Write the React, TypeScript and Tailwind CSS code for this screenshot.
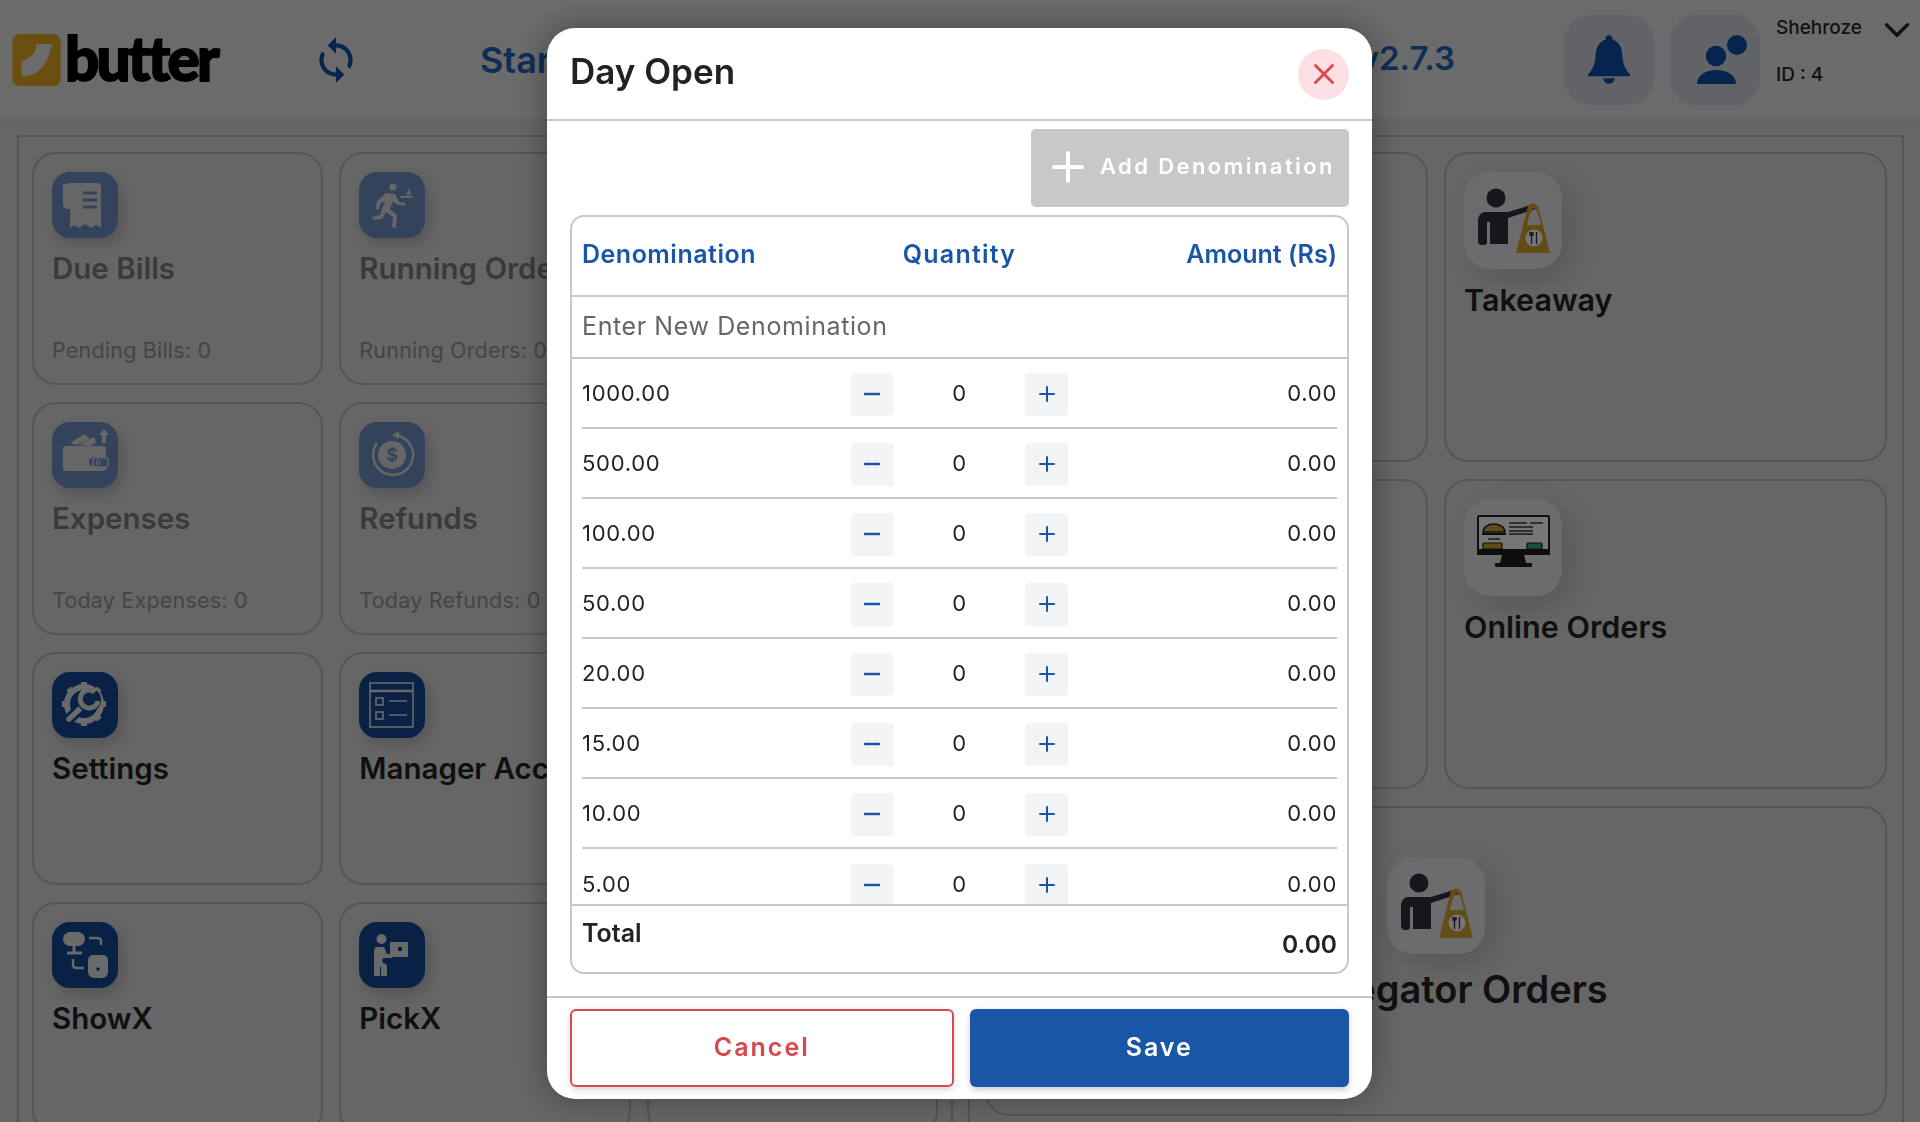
import type { ReactNode } from 'react';
import { ChevronDown, Minus, Plus, X } from 'lucide-react';
import { MdSync } from 'react-icons/md';

const denominations = ['1000.00', '500.00', '100.00', '50.00', '20.00', '15.00', '10.00', '5.00'];

function ReceiptIcon() {
  return (
    <svg viewBox="0 0 66 66" className="h-full w-full">
      <path d="M11 12h8a4 4 0 0 1 4 4v17a5 5 0 0 1-5 4h-3a5 5 0 0 1-4-4z" fill="#cccccc" />
      <path d="M15 11h30a4 4 0 0 1 4 4v41l-5-3-5 3-6-4-6 4-5-3-4 3V17a6 6 0 0 0-3-6z" fill="#cccccc" />
      <path d="M31 21h14M31 28h14M31 35h14" stroke="#6886b8" strokeWidth="3" />
    </svg>
  );
}

function RunnerIcon() {
  return (
    <svg viewBox="0 0 66 66" className="h-full w-full">
      <circle cx="34" cy="15" r="3.600" fill="#cccccc" />
      <path
        d="M27 21l9 1 4 8 7 1-1 3-9-2-3-3-3 8 7 6-1 13-4-1 1-10-7-5-4 7-9 1-1-3 8-2 5-14-5 3-1 6-3-1 1-8z"
        fill="#cccccc"
      />
      <path d="M41 26h12l1-2H41zM47 23h5l-2-7z" fill="#cccccc" />
    </svg>
  );
}

function WalletIcon() {
  return (
    <svg viewBox="0 0 66 66" className="h-full w-full">
      <path d="M18 21l15-9 5 5-14 6zM27 23l15-8 2 6-6 3z" fill="#cccccc" />
      <path d="M52 7l5 6h-3v8h-4v-8h-3z" fill="#cccccc" />
      <path d="M14 24h37a3 3 0 0 1 3 3v8H42a5 5 0 0 0 0 10h12v1a3 3 0 0 1-3 3H14a3 3 0 0 1-3-3V27a3 3 0 0 1 3-3z" fill="#cccccc" />
      <rect x="41" y="36" width="15" height="9" rx="2" fill="none" stroke="#cccccc" strokeWidth="1.500" />
      <circle cx="46" cy="40.500" r="1.800" fill="none" stroke="#cccccc" strokeWidth="1.200" />
    </svg>
  );
}

function RefundIcon() {
  return (
    <svg viewBox="0 0 66 66" className="h-full w-full">
      <path d="M36 13a20 20 0 1 1-18 8" fill="none" stroke="#cccccc" strokeWidth="2.400" />
      <path d="M40 9l-7 4 7 4z" fill="#cccccc" />
      <circle cx="33" cy="33" r="14" fill="#cccccc" />
      <text x="33" y="39" fontSize="17" fontWeight="700" textAnchor="middle" fill="#6886b8" fontFamily="Inter, sans-serif">
        $
      </text>
    </svg>
  );
}

function SettingsIcon() {
  return (
    <svg viewBox="0 0 66 66" className="h-full w-full">
      <circle cx="32" cy="32" r="17" fill="none" stroke="#d4d4d4" strokeWidth="6" />
      <path
        d="M32 10v6M32 48v6M10 32h6M48 32h6M16.500 16.500l4 4M43.500 43.500l4 4M47.500 16.500l-4 4M20.500 43.500l-4 4"
        stroke="#d4d4d4"
        strokeWidth="6"
      />
      <path d="M16 48l16-15" stroke="#114288" strokeWidth="11" />
      <path d="M17 47l15-14" stroke="#d4d4d4" strokeWidth="5.500" strokeLinecap="round" />
      <circle cx="37" cy="28" r="12" fill="#114288" />
      <path d="M43 20a9 9 0 1 0 3 9" fill="none" stroke="#d4d4d4" strokeWidth="5" />
    </svg>
  );
}

function ManagerIcon() {
  return (
    <svg viewBox="0 0 66 66" className="h-full w-full" fill="none" stroke="#d4d4d4" strokeWidth="1.600">
      <rect x="11" y="11" width="43" height="44" />
      <path d="M11 19h43" strokeWidth="2.400" />
      <rect x="17" y="26" width="7" height="7" />
      <rect x="17" y="40" width="7" height="7" />
      <path d="M30 29h18M30 43h18" />
    </svg>
  );
}

function ShowXIcon() {
  return (
    <svg viewBox="0 0 66 66" className="h-full w-full">
      <rect x="11" y="10" width="22" height="14" rx="7" fill="#d4d4d4" />
      <path d="M22 24v6M15 31h15" stroke="#d4d4d4" strokeWidth="3" />
      <path d="M37 16h9a3 3 0 0 1 3 3v4M21 37v6a3 3 0 0 0 3 3h8" fill="none" stroke="#d4d4d4" strokeWidth="2.400" />
      <path d="M36 38a5 5 0 0 1 5-5h10a5 5 0 0 1 5 5v12a6 6 0 0 1-6 6h-8a6 6 0 0 1-6-6z" fill="#d4d4d4" />
      <circle cx="46" cy="47" r="1.800" fill="#114288" />
    </svg>
  );
}

function PickXIcon() {
  return (
    <svg viewBox="0 0 66 66" className="h-full w-full">
      <circle cx="22.500" cy="17" r="5" fill="#d4d4d4" />
      <path d="M17 25h8l3 7h5v4H24l-1 4 5 3v11h-6v-9h-1v9h-6V29a5 5 0 0 1 2-4z" fill="#d4d4d4" />
      <rect x="31" y="20" width="18" height="15" fill="#d4d4d4" />
      <rect x="39" y="25" width="4" height="4" fill="#114288" />
    </svg>
  );
}

function BagPersonIcon() {
  return (
    <svg viewBox="0 0 98 97" className="h-full w-full">
      <circle cx="32" cy="26" r="9.500" fill="#302c38" />
      <path
        d="M20 40h24l26-8 2 5-22 7-6 2v26H26V50h-3v21a3 3 0 0 1-3 2h-2a4 4 0 0 1-4-3V48a9 9 0 0 1 6-8z"
        fill="#302c38"
      />
      <path
        d="M64 34q5-5 10 0l12 47H52zM63 53h14q-3-15-7-17-4 2-7 17z"
        fill="#c79a2c"
        fillRule="evenodd"
      />
      <circle cx="70" cy="66" r="8.500" fill="#ececec" />
      <path d="M67.500 60v12M72.500 60v12M66 60v3h3v-3" fill="none" stroke="#302c38" strokeWidth="1.300" />
    </svg>
  );
}

function MonitorIcon() {
  return (
    <svg viewBox="0 0 98 97" className="h-full w-full">
      <rect x="14" y="17" width="71" height="38" rx="1.500" fill="#ececec" stroke="#1c1c22" strokeWidth="2" />
      <rect x="13" y="50" width="73" height="6" fill="#1c1c22" />
      <path d="M38 56h22l2 8H36z" fill="#1c1c22" />
      <rect x="31" y="64" width="37" height="4" rx="1" fill="#1c1c22" />
      <path d="M19 33a11 8 0 0 1 22 0z" fill="#c79a2c" stroke="#1c1c22" strokeWidth="1.400" />
      <path d="M18 35h24" stroke="#1c1c22" strokeWidth="2" />
      <path d="M45 24h18M66 24h13M45 28h24M45 32h24M45 35h24M24 40h12" stroke="#333" strokeWidth="1.500" />
      <rect x="19" y="44" width="19" height="6" rx="1" fill="#c79a2c" stroke="#1c1c22" strokeWidth="1.200" />
      <rect x="63" y="44" width="15" height="6" rx="1" fill="#2fa36b" stroke="#1c1c22" strokeWidth="1.200" />
    </svg>
  );
}

function ButterLogo() {
  return (
    <div className="flex items-center">
      <svg viewBox="37 68 146 157" className="h-[52px] w-[49px] shrink-0">
        <rect x="37" y="68" width="146" height="157" rx="20" fill="#d4a020" />
        <path d="M157 98h-47c0 26-16 42-45 52v45c50 0 76-30 92-97z" fill="#d6d6d6" />
      </svg>
      <span className="mt-[-3px] ml-[4px] font-['Lato'] text-[60px] leading-none font-black tracking-[-2.700px] text-black [-webkit-text-stroke:1.800px_#000]">
        butter
      </span>
    </div>
  );
}

function IconTile({ bg, children }: { bg: string; children: ReactNode }) {
  return (
    <div className={`h-[66px] w-[66px] shrink-0 rounded-[18px] ${bg} shadow-[4px_6px_14px_rgba(0,0,0,0.18)]`}>
      {children}
    </div>
  );
}

function SmallCard({ title, sub, icon, disabled }: { title: string; sub?: string; icon: ReactNode; disabled?: boolean }) {
  return (
    <div className="flex min-w-0 flex-col overflow-hidden rounded-[24px] border-2 border-[#aaaaaa] pt-[18px] pb-[19px] pl-[18px]">
      <IconTile bg={disabled ? 'bg-[#6886b8]' : 'bg-[#114288]'}>{icon}</IconTile>
      <div className={`mt-[12px] whitespace-nowrap text-[29.500px] leading-[36px] font-semibold ${disabled ? 'text-[#757575]' : 'text-[#202020]'}`}>
        {title}
      </div>
      {sub && <div className="mt-auto whitespace-nowrap text-[21.500px] leading-[28px] tracking-[0.2px] text-[#8a8a8a]">{sub}</div>}
    </div>
  );
}

function LargeTile({ children }: { children: ReactNode }) {
  return (
    <div className="h-[97px] w-[98px] shrink-0 rounded-[26px] bg-[#d8d9dc] shadow-[10px_10px_30px_rgba(0,0,0,0.14)]">
      {children}
    </div>
  );
}

function WideCard({ title, icon }: { title: string; icon: ReactNode }) {
  return (
    <div className="flex min-w-0 flex-col rounded-[24px] border-2 border-[#aaaaaa] pt-[18px] pl-[18px]">
      <LargeTile>{icon}</LargeTile>
      <div className="mt-[11px] whitespace-nowrap text-[30.500px] leading-[40px] font-semibold text-[#202020]">{title}</div>
    </div>
  );
}

function Dashboard() {
  return (
    <div className="h-screen overflow-hidden bg-[#cccccc] font-['Inter',sans-serif]">
      <header className="flex h-[121px] items-center border-b-2 border-[#c4c4c4] bg-[#d6d6d6] pl-[12px]">
        <ButterLogo />
        <MdSync className="ml-[94px] text-[#0e4a9a]" size={50} />
        <span className="ml-[119px] text-[36px] font-semibold text-[#1c5cb0]">Start Day</span>
        <span className="mb-[2px] ml-auto text-[33px] font-semibold text-[#1c5cb0]">v2.7.3</span>
        <div className="ml-[109px] flex h-[90px] w-[90px] items-center justify-center rounded-[26px] bg-[#c4c7ce]">
          <svg viewBox="0 0 44 52" className="h-[50px] w-[42px]" fill="#0c4a9c">
            <path d="M22 0a3.600 3.600 0 0 1 3.600 4.500C33 7 35.500 13 36 21c.4 7 2 14 8 20v2H0v-2c6-6 7.600-13 8-20 .5-8 3-14 10.400-16.500A3.600 3.600 0 0 1 22 0z" />
            <path d="M16 45h12a6 6 0 0 1-12 0z" />
          </svg>
        </div>
        <div className="ml-[16px] flex h-[90px] w-[90px] items-center rounded-[26px] bg-[#c4c7ce] pl-[27px]">
          <svg viewBox="0 0 50 49" className="h-[49px] w-[50px]" fill="#0c4a9c">
            <circle cx="40" cy="10" r="10" />
            <circle cx="19" cy="21" r="11" stroke="#c4c7ce" strokeWidth="1.500" />
            <path d="M0 49c0-9 9-14 19.500-14S39 40 39 49z" />
          </svg>
        </div>
        <div className="ml-[16px] flex h-[90px] w-[144px] flex-col self-start pt-[15px]">
          <div className="flex h-[26px] items-center justify-between">
            <span className="text-[19px] leading-[26px] font-medium text-[#242424]">Shehroze</span>
            <ChevronDown className="mt-[4px] mr-[2px] shrink-0 text-[#242424]" size={42} strokeWidth={2} />
          </div>
          <span className="mt-[21px] text-[19px] leading-[26px] font-medium text-[#242424]">ID : 4</span>
        </div>
      </header>

      <main className="flex gap-[15px] pt-[14px] pl-[17px] pr-[16px]">
        <section className="grid w-[936px] shrink-0 grid-cols-3 auto-rows-[233px] gap-x-4 gap-y-[17px] border-2 border-[#aaaaaa] px-[13px] pt-[15px]">
          <SmallCard title="Due Bills" sub="Pending Bills: 0" disabled icon={<ReceiptIcon />} />
          <SmallCard title="Running Orders" sub="Running Orders: 0" disabled icon={<RunnerIcon />} />
          <SmallCard title="" icon={null} />
          <SmallCard title="Expenses" sub="Today Expenses: 0" disabled icon={<WalletIcon />} />
          <SmallCard title="Refunds" sub="Today Refunds: 0" disabled icon={<RefundIcon />} />
          <SmallCard title="" icon={null} />
          <SmallCard title="Settings" icon={<SettingsIcon />} />
          <SmallCard title="Manager Access" icon={<ManagerIcon />} />
          <SmallCard title="" icon={null} />
          <SmallCard title="ShowX" icon={<ShowXIcon />} />
          <SmallCard title="PickX" icon={<PickXIcon />} />
          <SmallCard title="" icon={null} />
        </section>

        <section className="grid flex-1 grid-cols-2 grid-rows-[310px_310px_310px] gap-x-4 gap-y-[17px] border-2 border-[#aaaaaa] px-[15px] pt-[15px]">
          <WideCard title="Dine In" icon={null} />
          <WideCard title="Takeaway" icon={<BagPersonIcon />} />
          <WideCard title="Delivery" icon={null} />
          <WideCard title="Online Orders" icon={<MonitorIcon />} />
          <div className="col-span-2 flex flex-col items-center rounded-[24px] border-2 border-[#aaaaaa] pt-[49px]">
            <LargeTile>
              <BagPersonIcon />
            </LargeTile>
            <div className="mt-[12px] whitespace-nowrap text-[38px] leading-[46px] font-semibold text-[#202020]">
              Aggregator Orders
            </div>
          </div>
        </section>
      </main>
    </div>
  );
}

function DenominationRow({ value }: { value: string }) {
  return (
    <div className="mx-[10px] grid h-[70px] shrink-0 grid-cols-3 items-center border-b-2 border-[#c8c8c8] pt-[2px] last:border-b-0">
      <span className="mt-[-2px]">{value}</span>
      <div className="flex items-center justify-between px-[17px]">
        <button className="flex h-[43px] w-[43px] items-center justify-center rounded-[4px] bg-[#f3f4f6] text-[#1a56a8]">
          <Minus size={24} strokeWidth={2.500} />
        </button>
        <span className="mt-[-2px]">0</span>
        <button className="flex h-[43px] w-[43px] items-center justify-center rounded-[4px] bg-[#f3f4f6] text-[#1a56a8]">
          <Plus size={24} strokeWidth={2} />
        </button>
      </div>
      <span className="mt-[-2px] text-right">0.00</span>
    </div>
  );
}

function DayOpenModal() {
  return (
    <div className="fixed inset-0 flex items-start justify-center bg-black/50 pt-[28px] pr-[1px] font-['Inter',sans-serif]">
      <div className="flex h-[1071px] w-[825px] flex-col overflow-hidden rounded-[28px] bg-white shadow-[0_0_32px_rgba(0,0,0,0.35)]">
        <div className="flex h-[93px] shrink-0 items-center justify-between border-b-2 border-[#c8c8c8] pr-[23px] pl-[23px]">
          <h2 className="mt-[-5px] text-[35px] font-semibold text-[#222222]">Day Open</h2>
          <button className="mt-[1px] flex h-[51px] w-[51px] items-center justify-center rounded-full bg-[#fde0e4] text-[#e0474c]">
            <X size={34} strokeWidth={2} />
          </button>
        </div>

        <div className="flex flex-1 flex-col px-[23px] pt-[8px]">
          <button className="flex h-[78px] w-[318px] shrink-0 items-center self-end rounded-[5px] bg-[#c8c8c8] pb-[2px] pl-[13px] text-[22px] font-semibold tracking-[2.400px] text-white">
            <Plus size={48} strokeWidth={2} />
            <span className="mt-[-1px] ml-[8px]">Add Denomination</span>
          </button>

          <div className="mt-[8px] flex h-[759px] shrink-0 flex-col overflow-hidden rounded-[14px] border-2 border-[#c8c8c8] text-[22px] tracking-[0.7px] text-[#222222]">
            <div className="grid h-[80px] shrink-0 grid-cols-3 items-center border-b-2 border-[#c8c8c8] px-[10px] pb-[3px] text-[25px] font-semibold tracking-[0.5px] text-[#1a56a8]">
              <span>Denomination</span>
              <span className="text-center tracking-[1.200px]">Quantity</span>
              <span className="text-right tracking-normal">Amount (Rs)</span>
            </div>
            <div className="flex h-[62px] shrink-0 items-center border-b-2 border-[#c8c8c8] px-[10px] text-[25px] tracking-[0.6px] text-[#666666]">
              Enter New Denomination
            </div>
            <div className="flex h-[545px] shrink-0 flex-col overflow-hidden">
              {denominations.map((value) => (
                <DenominationRow key={value} value={value} />
              ))}
            </div>
            <div className="flex flex-1 justify-between border-t-2 border-[#c8c8c8] px-[10px] font-semibold tracking-normal">
              <span className="mt-[9px] text-[25px]">Total</span>
              <span className="mt-[20px] text-[24.500px]">0.00</span>
            </div>
          </div>
        </div>

        <div className="flex h-[103px] shrink-0 gap-[16px] border-t-2 border-[#c8c8c8] px-[23px] pt-[11px]">
          <button className="h-[78px] flex-1 rounded-[6px] border-2 border-[#d9484f] text-[25px] font-semibold tracking-[2px] text-[#d9484f] shadow-[0_3px_6px_rgba(0,0,0,0.15)]">
            Cancel
          </button>
          <button className="h-[78px] flex-1 rounded-[6px] bg-[#1a56a8] text-[25px] font-semibold tracking-[2px] text-white shadow-[0_3px_6px_rgba(0,0,0,0.2)]">
            Save
          </button>
        </div>
      </div>
    </div>
  );
}

export default function App() {
  return (
    <>
      <Dashboard />
      <DayOpenModal />
    </>
  );
}
